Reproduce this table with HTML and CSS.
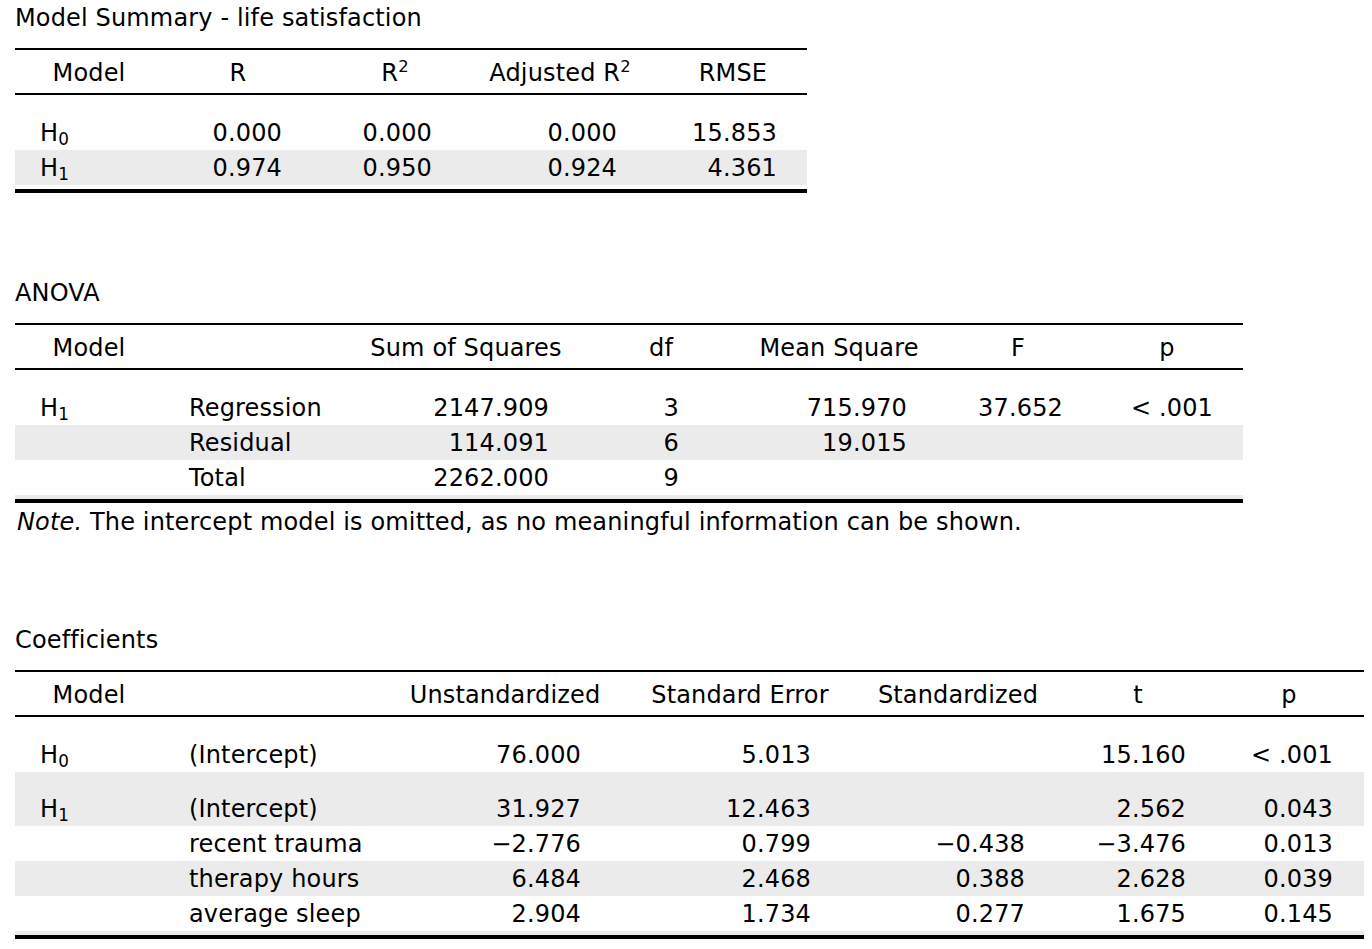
FILE: index.html
```html
<!DOCTYPE html>
<html lang="en">
<head>
<meta charset="utf-8">
<title>Linear Regression</title>
<link rel="stylesheet" href="styles.css">
</head>
<body>
<div class="report">

  <section class="block block-summary">
    <h2 class="title">Model Summary - life satisfaction</h2>
    <table class="stats t-summary">
      <colgroup>
        <col class="w148"><col class="w150"><col class="w164"><col class="w166"><col class="w164">
      </colgroup>
      <thead>
        <tr><th>Model</th><th>R</th><th>R<sup>2</sup></th><th>Adjusted R<sup>2</sup></th><th>RMSE</th></tr>
      </thead>
      <tbody>
        <tr class="spacer"><td colspan="5"></td></tr>
        <tr><td>H<sub>0</sub></td><td>0.000</td><td>0.000</td><td>0.000</td><td>15.853</td></tr>
        <tr class="shade"><td>H<sub>1</sub></td><td>0.974</td><td>0.950</td><td>0.924</td><td>4.361</td></tr>
        <tr class="end"><td colspan="5"></td></tr>
      </tbody>
    </table>
  </section>

  <section class="block block-anova">
    <h2 class="title">ANOVA</h2>
    <table class="stats t-anova">
      <colgroup>
        <col class="w148"><col class="w180"><col class="w246"><col class="w144"><col class="w212"><col class="w146"><col class="w152">
      </colgroup>
      <thead>
        <tr><th>Model</th><th></th><th>Sum of Squares</th><th>df</th><th>Mean Square</th><th>F</th><th>p</th></tr>
      </thead>
      <tbody>
        <tr class="spacer"><td colspan="7"></td></tr>
        <tr><td>H<sub>1</sub></td><td>Regression</td><td>2147.909</td><td>3</td><td>715.970</td><td>37.652</td><td>&lt; .001</td></tr>
        <tr class="shade"><td></td><td>Residual</td><td>114.091</td><td>6</td><td>19.015</td><td></td><td></td></tr>
        <tr><td></td><td>Total</td><td>2262.000</td><td>9</td><td></td><td></td><td></td></tr>
        <tr class="end shade"><td colspan="7"></td></tr>
      </tbody>
    </table>
    <p class="note"><em>Note.</em> The intercept model is omitted, as no meaningful information can be shown.</p>
  </section>

  <section class="block block-coef">
    <h2 class="title">Coefficients</h2>
    <table class="stats t-coef">
      <colgroup>
        <col class="w148"><col class="w221"><col class="w242"><col class="w228"><col class="w208"><col class="w152"><col class="w150">
      </colgroup>
      <thead>
        <tr><th>Model</th><th></th><th>Unstandardized</th><th>Standard Error</th><th>Standardized</th><th>t</th><th>p</th></tr>
      </thead>
      <tbody>
        <tr class="spacer"><td colspan="7"></td></tr>
        <tr><td>H<sub>0</sub></td><td>(Intercept)</td><td>76.000</td><td>5.013</td><td></td><td>15.160</td><td>&lt; .001</td></tr>
        <tr class="shade group-start"><td>H<sub>1</sub></td><td>(Intercept)</td><td>31.927</td><td>12.463</td><td></td><td>2.562</td><td>0.043</td></tr>
        <tr><td></td><td>recent trauma</td><td>&minus;2.776</td><td>0.799</td><td>&minus;0.438</td><td>&minus;3.476</td><td>0.013</td></tr>
        <tr class="shade"><td></td><td>therapy hours</td><td>6.484</td><td>2.468</td><td>0.388</td><td>2.628</td><td>0.039</td></tr>
        <tr><td></td><td>average sleep</td><td>2.904</td><td>1.734</td><td>0.277</td><td>1.675</td><td>0.145</td></tr>
        <tr class="end shade"><td colspan="7"></td></tr>
      </tbody>
    </table>
  </section>

</div>
</body>
</html>
```

FILE: styles.css
```css
html, body {
  margin: 0;
  padding: 0;
  background: #ffffff;
}

body {
  font-family: "DejaVu Sans", Verdana, sans-serif;
  font-size: 24px;
  letter-spacing: 0.15px;
  color: #000000;
}

.report {
  padding: 3px 0 0 15px;
}

.title {
  margin: 0;
  padding-top: 1px;
  font-size: 24px;
  font-weight: normal;
  line-height: 29px;
  white-space: nowrap;
}

.block-anova {
  margin-top: 85px;
}

.block-coef {
  margin-top: 88px;
}

/* ---------- tables ---------- */
.stats {
  margin-top: 15px;
  border-collapse: separate;
  border-spacing: 0;
  table-layout: fixed;
}

.t-summary { width: 792px; }
.t-anova   { width: 1228px; }
.t-coef    { width: 1349px; }

.w144 { width: 144px; }
.w146 { width: 146px; }
.w148 { width: 148px; }
.w150 { width: 150px; }
.w152 { width: 152px; }
.w164 { width: 164px; }
.w166 { width: 166px; }
.w180 { width: 180px; }
.w208 { width: 208px; }
.w212 { width: 212px; }
.w221 { width: 221px; }
.w228 { width: 228px; }
.w242 { width: 242px; }
.w246 { width: 246px; }

.stats th {
  padding: 4px 0 0 0;
  font-weight: normal;
  line-height: 39px;
  text-align: center;
  white-space: nowrap;
  border-top: 2px solid #000;
  border-bottom: 2px solid #000;
}

.stats td {
  padding: 2px 0 0 0;
  line-height: 33px;
  text-align: right;
  white-space: nowrap;
  vertical-align: bottom;
}

.stats td:nth-child(1) {
  text-align: left;
  padding-left: 25px;
}

.t-anova td:nth-child(2),
.t-coef td:nth-child(2) {
  text-align: left;
  padding-left: 26px;
}

.stats tr.shade td {
  background: #ebebeb;
}

.stats tr.spacer td {
  height: 20px;
  line-height: 0;
  font-size: 0;
  padding: 0;
}

.stats tr.end td {
  height: 4px;
  line-height: 0;
  font-size: 0;
  padding: 0;
  border-bottom: 4px solid #000;
}

.stats tr.group-start td {
  padding-top: 21px;
}

/* model summary columns */
.t-summary td:nth-child(2) { padding-right: 31px; }
.t-summary td:nth-child(3) { padding-right: 45px; }
.t-summary td:nth-child(4) { padding-right: 26px; }
.t-summary td:nth-child(5) { padding-right: 30px; }
.t-summary th:nth-child(5) { padding-left: 16px; }

/* anova columns */
.t-anova td:nth-child(3) { padding-right: 40px; }
.t-anova td:nth-child(4) { padding-right: 54px; }
.t-anova td:nth-child(5) { padding-right: 38px; }
.t-anova td:nth-child(6) { padding-right: 28px; }
.t-anova td:nth-child(7) { padding-right: 30px; }

/* coefficient columns */
.t-coef td:nth-child(3) { padding-right: 45px; }
.t-coef td:nth-child(4) { padding-right: 43px; }
.t-coef td:nth-child(5) { padding-right: 37px; }
.t-coef td:nth-child(6) { padding-right: 28px; }
.t-coef td:nth-child(7) { padding-right: 31px; }

sub {
  font-size: 0.7em;
  line-height: 0;
  vertical-align: -0.22em;
}

sup {
  font-size: 0.68em;
  line-height: 0;
  vertical-align: 0.55em;
}

.note {
  margin: 4px 0 0 2px;
  line-height: 30px;
  white-space: nowrap;
}

.note em {
  font-style: italic;
}
```
